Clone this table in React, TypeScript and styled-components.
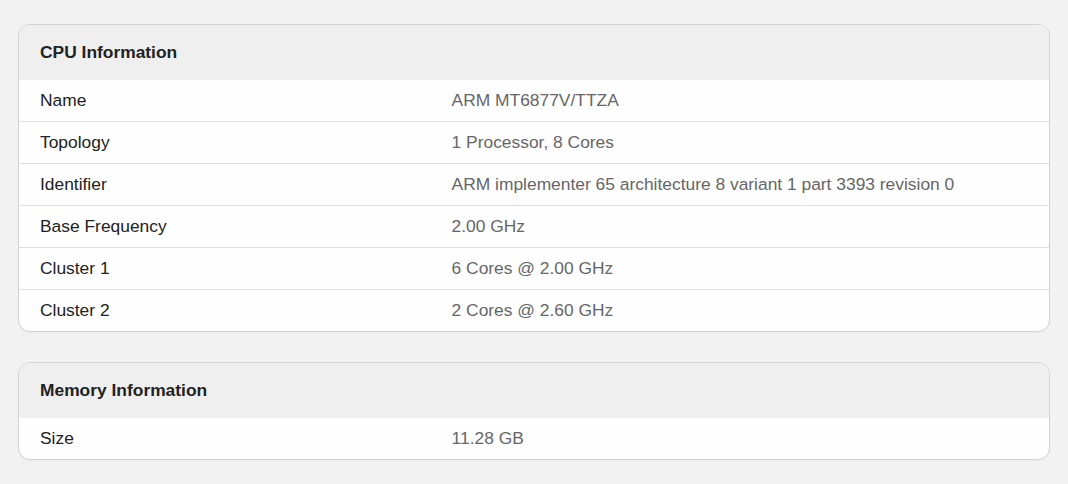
import styled, { createGlobalStyle } from 'styled-components';

const GlobalStyle = createGlobalStyle`
  html, body {
    margin: 0;
    padding: 0;
    background: #f2f2f2;
    font-family: "Liberation Sans", Arial, sans-serif;
  }
`;

const Page = styled.div`
  display: flex;
  flex-direction: column;
  gap: 30px;
  padding: 24px 18px;
`;

const Card = styled.section`
  background: #fefefe;
  border: 1px solid #d3d3d3;
  border-radius: 12px;
  overflow: hidden;
  box-shadow: 0 1px 2px rgba(0, 0, 0, 0.04);
`;

const CardHeader = styled.h2`
  margin: 0;
  height: 55px;
  display: flex;
  align-items: center;
  padding: 0 21px;
  background: #efefef;
  font-size: 17.4px;
  font-weight: bold;
  color: #222;
`;

const Row = styled.div`
  display: grid;
  grid-template-columns: 42% 1fr;
  height: 41px;
  align-items: center;
  font-size: 17.4px;

  & + & {
    border-top: 1px solid #dedede;
  }
`;

const Label = styled.div`
  padding-left: 21px;
  color: #222;
`;

const Value = styled.div`
  color: #666;
`;

type Item = { label: string; value: string };

const cpu: Item[] = [
  { label: 'Name', value: 'ARM MT6877V/TTZA' },
  { label: 'Topology', value: '1 Processor, 8 Cores' },
  { label: 'Identifier', value: 'ARM implementer 65 architecture 8 variant 1 part 3393 revision 0' },
  { label: 'Base Frequency', value: '2.00 GHz' },
  { label: 'Cluster 1', value: '6 Cores @ 2.00 GHz' },
  { label: 'Cluster 2', value: '2 Cores @ 2.60 GHz' },
];

const memory: Item[] = [{ label: 'Size', value: '11.28 GB' }];

const InfoCard = ({ title, items }: { title: string; items: Item[] }) => (
  <Card>
    <CardHeader>{title}</CardHeader>
    {items.map((item) => (
      <Row key={item.label}>
        <Label>{item.label}</Label>
        <Value>{item.value}</Value>
      </Row>
    ))}
  </Card>
);

export default function App() {
  return (
    <>
      <GlobalStyle />
      <Page>
        <InfoCard title="CPU Information" items={cpu} />
        <InfoCard title="Memory Information" items={memory} />
      </Page>
    </>
  );
}
